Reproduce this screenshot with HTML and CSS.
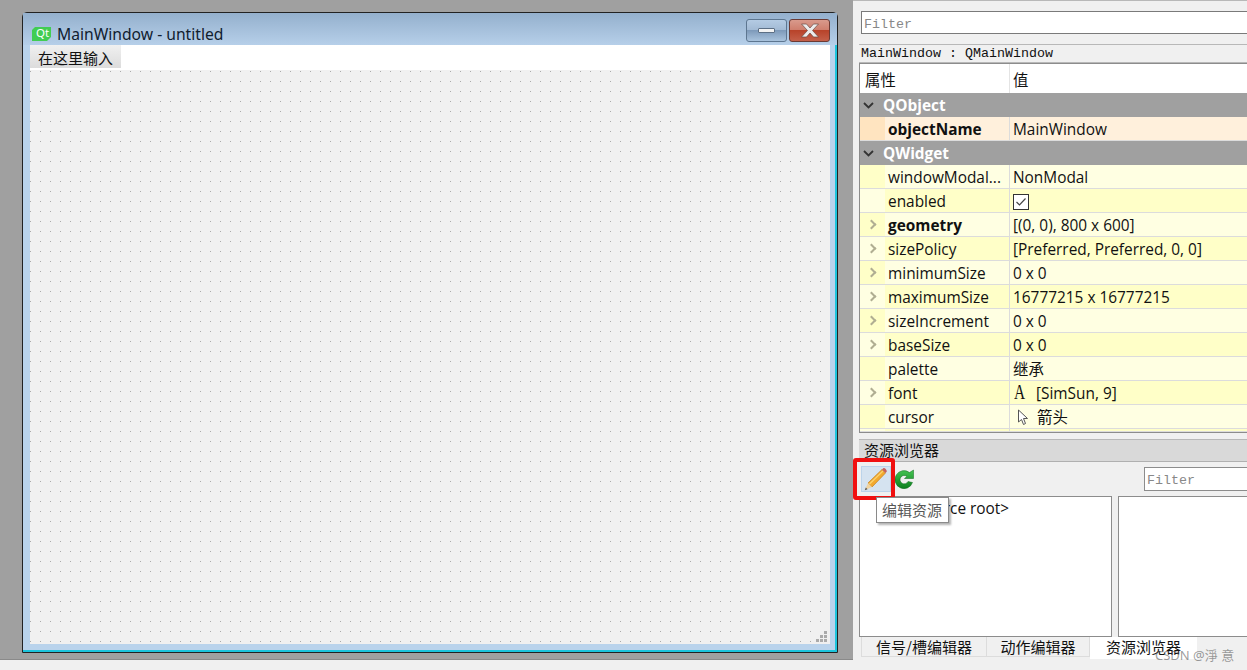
FILE: index.html
```html
<!DOCTYPE html>
<html lang="zh-CN">
<head>
    <meta charset="UTF-8">
    <title>Qt Designer - MainWindow</title>
    <link rel="stylesheet" href="styles.css">
</head>
<body>
    <div class="app">
        <!-- form editor -->
        <div class="canvas">
            <div class="form-window">
                <div class="title-bar">
                    <svg class="qt-logo" width="19" height="14" viewBox="0 0 19 14">
                        <path d="M3 0H19V10L15 14H0V3Z" fill="#41cd52"/>
                    </svg>
                    <span class="qt-text">Qt</span>
                    <span class="title-text">MainWindow - untitled</span>
                    <div class="win-btn min-btn"><span class="min-mark"></span></div>
                    <div class="win-btn close-btn">
                        <svg width="20" height="15" viewBox="0 0 20 15">
                            <path d="M1.500 1H6.500L10 5L13.500 1H18.500L12.500 7.500L18.500 14H13.500L10 10L6.500 14H1.500L7.500 7.500Z" fill="#ececec" stroke="#6b4a44" stroke-width="0.7"/>
                        </svg>
                    </div>
                </div>
                <div class="form-body">
                    <div class="menu-bar"><span class="menu-item">在这里输入</span></div>
                    <div class="dots">
                        <svg class="grip" width="11" height="11" viewBox="0 0 11 11" fill="#aaa">
                            <rect x="8" y="0" width="3" height="3"/>
                            <rect x="4" y="4" width="3" height="3"/><rect x="8" y="4" width="3" height="3"/>
                            <rect x="0" y="8" width="3" height="3"/><rect x="4" y="8" width="3" height="3"/><rect x="8" y="8" width="3" height="3"/>
                        </svg>
                    </div>
                </div>
            </div>
        </div>

        <!-- right side docks -->
        <div class="side">
            <div class="prop-filter"><div class="filter-input">Filter</div></div>
            <div class="object-label">MainWindow : QMainWindow</div>

            <div class="prop-table">
                <div class="row head"><div class="c1">属性</div><div class="c2">值</div></div>
                <div class="row group"><svg class="chev" width="11" height="7" viewBox="0 0 11 7"><path d="M1 1L5.500 5.500L10 1" fill="none" stroke="#333" stroke-width="1.8"/></svg>QObject</div>
                <div class="row orange"><div class="c1"><b>objectName</b></div><div class="c2">MainWindow</div></div>
                <div class="row group"><svg class="chev" width="11" height="7" viewBox="0 0 11 7"><path d="M1 1L5.500 5.500L10 1" fill="none" stroke="#333" stroke-width="1.8"/></svg>QWidget</div>
                <div class="row"><div class="c1">windowModal...</div><div class="c2">NonModal</div></div>
                <div class="row alt"><div class="c1">enabled</div><div class="c2">
                    <svg class="check" width="16" height="16" viewBox="0 0 16 16"><rect x="0.5" y="0.5" width="15" height="15" fill="#fff" stroke="#333"/><path d="M3.500 8L6.500 11L12.500 4.500" fill="none" stroke="#444" stroke-width="1.2"/></svg>
                </div></div>
                <div class="row"><div class="c1 more"><b>geometry</b></div><div class="c2">[(0, 0), 800 x 600]</div></div>
                <div class="row alt"><div class="c1 more">sizePolicy</div><div class="c2">[Preferred, Preferred, 0, 0]</div></div>
                <div class="row"><div class="c1 more">minimumSize</div><div class="c2">0 x 0</div></div>
                <div class="row alt"><div class="c1 more">maximumSize</div><div class="c2">16777215 x 16777215</div></div>
                <div class="row"><div class="c1 more">sizeIncrement</div><div class="c2">0 x 0</div></div>
                <div class="row alt"><div class="c1 more">baseSize</div><div class="c2">0 x 0</div></div>
                <div class="row"><div class="c1">palette</div><div class="c2">继承</div></div>
                <div class="row alt"><div class="c1 more">font</div><div class="c2"><span class="font-box"><span class="font-a">A</span></span>[SimSun, 9]</div></div>
                <div class="row"><div class="c1">cursor</div><div class="c2">
                    <svg class="arrow" width="12" height="17" viewBox="0 0 12 17"><path d="M1.500 1V13L4.500 10.500L6.500 15.500L8.500 14.500L6.500 9.500H10.500Z" fill="#fff" stroke="#555"/></svg>箭头
                </div></div>
                <div class="row alt stub"><div class="c1"></div><div class="c2"></div></div>
            </div>

            <div class="res-title">资源浏览器</div>
            <div class="res-tools">
                <div class="tool-btn">
                    <svg width="24" height="24" viewBox="0 0 24 24">
                        <path d="M4 16L18 2.500L21.500 6L8 20Z" fill="#f2a92e" stroke="#c47d18" stroke-width="0.7"/>
                        <path d="M5.500 17L19 4" stroke="#fbd36e" stroke-width="1.300"/>
                        <path d="M4 16L8 20L0.800 23.200Z" fill="#f0d3a0"/>
                        <path d="M0.800 23.200L1.800 20.500L3.500 22.200Z" fill="#555"/>
                        <path d="M18 2.500L19.500 1C20.800 0.500 23 3 22.800 4.500L21.500 6Z" fill="#c9605a"/>
                    </svg>
                </div>
                <svg class="refresh" width="20" height="20" viewBox="0 0 20 20">
                    <defs>
                        <linearGradient id="refresh-fill" x1="0" y1="0" x2="0" y2="1">
                            <stop offset="0" stop-color="#45c452"/>
                            <stop offset="1" stop-color="#0c7f1e"/>
                        </linearGradient>
                    </defs>
                    <path d="M17.500 13.500A9 9 0 1 1 14.500 3.500L18.500 1V9.500H9.500L12 7.500A4.200 4.200 0 1 0 13 12.500Z" fill="url(#refresh-fill)" stroke="#0d6b1a" stroke-width="0.5"/>
                </svg>
                <div class="res-filter">Filter</div>
            </div>
            <div class="res-panes">
                <div class="pane pane-left">&lt;resource root&gt;</div>
                <div class="pane pane-right"></div>
            </div>
            <div class="tabs">
                <div class="tab tab-a">信号/槽编辑器</div>
                <div class="tab tab-b">动作编辑器</div>
                <div class="tab tab-on">资源浏览器</div>
            </div>
        </div>
    </div>

    <!-- things lying over the docks -->
    <div class="red-box"></div>
    <div class="tooltip">编辑资源</div>
    <div class="watermark">CSDN @淨 意</div>
</body>
</html>
```

FILE: styles.css
```css
html, body {
    margin: 0;
    padding: 0;
    height: 670px;
    overflow: hidden;
}
body {
    position: relative;
    width: 1247px;
    background: #f0f0f0;
    font-family: "Open Sans", "Noto Sans CJK SC", sans-serif;
    font-size: 15.4px;
    color: #111;
}
.app {
    display: flex;
    height: 670px;
}

/* form editor */
.canvas {
    width: 853px;
    height: 660px;
    box-sizing: border-box;
    padding: 12px 0 0 22px;
    background: #a0a0a0;
    border-bottom: 1px solid #8a8a8a;
}
.form-window {
    width: 816px;
    height: 641px;
    box-sizing: border-box;
    display: flex;
    flex-direction: column;
    border: 1px solid #222;
    border-radius: 5px 5px 0 0;
    background: #b9d3ec;
    box-shadow: inset -2px -2px 0 #1cc4dc;
}
.title-bar {
    height: 32px;
    flex: none;
    display: flex;
    align-items: center;
    position: relative;
    padding: 9px 7px 0 9px;
    box-sizing: border-box;
    background: linear-gradient(#94b0cd, #b6cfe9);
}
.qt-logo {
    flex: none;
}
.qt-text {
    position: absolute;
    left: 13px;
    top: 13px;
    font-size: 11.5px;
    line-height: 14px;
    color: #fff;
    font-family: "Noto Sans", sans-serif;
}
.title-text {
    margin-left: 6px;
    flex: 1;
    font-size: 15.66px;
    color: #10202f;
    font-family: "Noto Sans", sans-serif;
}
.win-btn {
    height: 23px;
    box-sizing: border-box;
    display: flex;
    align-items: center;
    justify-content: center;
    border-radius: 3px;
    position: relative;
    top: -3px;
}
.min-btn {
    width: 41px;
    margin-right: 2px;
    border: 1px solid #5d7690;
    background: linear-gradient(#b4cbe3 0, #a2bad4 48%, #7e9aba 50%, #a9c3dd 100%);
}
.min-mark {
    width: 17px;
    height: 5px;
    box-sizing: border-box;
    background: #f3f3f3;
    border: 1px solid #5c6f85;
    border-radius: 1px;
}
.close-btn {
    width: 41px;
    border: 1px solid #6b3a34;
    background: linear-gradient(#d99a8c 0, #cf7f6e 46%, #b8432a 50%, #c4604a 100%);
}
.form-body {
    flex: 1;
    margin: 0 7px 8px 7px;
    display: flex;
    flex-direction: column;
    background: #f0f0f0;
}
.menu-bar {
    height: 25px;
    flex: none;
    background: #fff;
}
.menu-item {
    display: block;
    width: 91px;
    height: 23px;
    line-height: 25px;
    padding-left: 8px;
    box-sizing: border-box;
    font-family: "Noto Sans CJK SC", sans-serif;
    font-size: 15px;
    color: #111;
    background: linear-gradient(#f0f0f0, #dcdcdc);
}
.dots {
    flex: 1;
    position: relative;
    background-color: #aaa;
    background-image:
        linear-gradient(to right, transparent 1px, #f0f0f0 1px),
        linear-gradient(to bottom, transparent 1px, #f0f0f0 1px);
    background-size: 10px 10px;
    background-position: 0 1px;
}
.grip {
    position: absolute;
    right: 3px;
    bottom: 2px;
    background: #f0f0f0;
}

/* right side */
.side {
    width: 394px;
    flex: none;
    display: flex;
    flex-direction: column;
    box-sizing: border-box;
    padding-left: 6px;
    border-top: 1px solid #b8b8b8;
}
.prop-filter {
    height: 43px;
    flex: none;
    box-sizing: border-box;
    padding: 10px 0 0 2px;
}
.filter-input {
    height: 23px;
    box-sizing: border-box;
    overflow: hidden;
    border: 1px solid #7a7a7a;
    border-right: none;
    background: #fff;
    font-family: "Liberation Mono", monospace;
    font-size: 13.33px;
    line-height: 26px;
    padding-left: 2px;
    color: #888;
}
.object-label {
    height: 19px;
    flex: none;
    box-sizing: border-box;
    border-top: 1px solid #b8b8b8;
    border-bottom: 1px solid #b8b8b8;
    padding-left: 2px;
    font-family: "Liberation Mono", monospace;
    font-size: 13.33px;
    line-height: 18px;
    color: #111;
}
.prop-table {
    height: 370px;
    flex: none;
    box-sizing: border-box;
    overflow: hidden;
    border: 1px solid #8c8c8c;
    border-right: none;
    background: #fff;
}
.row {
    display: flex;
    height: 24px;
    box-sizing: border-box;
    line-height: 25px;
    background: #ffffe2 linear-gradient(#ffffc8, #ffffc8) no-repeat;
    background-size: 25px 100%;
    border-bottom: 1px solid #dcdcdc;
}
.row.alt {
    background: #ffffc8 linear-gradient(#ffffe2, #ffffe2) no-repeat;
    background-size: 25px 100%;
}
.row.orange {
    background: #fff0dc linear-gradient(#ffe4c0, #ffe4c0) no-repeat;
    background-size: 25px 100%;
}
.row.head {
    height: 29px;
    line-height: 33px;
    background: #fff;
    border-bottom: none;
}
.row.group {
    background: #a0a0a0;
    color: #fff;
    font-weight: bold;
    border-bottom: none;
    line-height: 25px;
}
.row.stub {
    height: 3px;
}
.chev {
    align-self: center;
    margin: 0 9px 0 3px;
}
.c1 {
    flex: none;
    width: 127px;
    margin-left: 23px;
    box-sizing: border-box;
    padding-left: 5px;
    border-right: 1px solid #dcdcdc;
    white-space: nowrap;
    overflow: hidden;
}
.row.head .c1 {
    width: 150px;
    margin-left: 0;
    border-right: 1px solid #e4e4e4;
}
.c1.more {
    position: relative;
    overflow: visible;
}
.c1.more::before {
    content: "";
    position: absolute;
    left: -15px;
    top: 8px;
    width: 5px;
    height: 5px;
    border-top: 2px solid #b0ae92;
    border-right: 2px solid #b0ae92;
    transform: rotate(45deg);
}
.c2 {
    flex: 1;
    box-sizing: border-box;
    padding: 2px 0 0 3px;
    display: flex;
    align-items: center;
    white-space: nowrap;
}
.row.head .c2 {
    padding-top: 0;
    align-items: flex-start;
}
.font-box {
    width: 23px;
    flex: none;
    padding-left: 1px;
    box-sizing: border-box;
}
.font-a {
    display: inline-block;
    font-family: "Liberation Serif", serif;
    font-size: 22px;
    line-height: 20px;
    transform: scaleX(0.7);
    transform-origin: left center;
}
.arrow {
    margin: 0 8px 0 4px;
}
.res-title {
    height: 23px;
    flex: none;
    margin-top: 6px;
    box-sizing: border-box;
    padding-left: 5px;
    background: #d9d9d9;
    border-top: 1px solid #b8b8b8;
    border-bottom: 1px solid #b0b0b0;
    font-family: "Noto Sans CJK SC", sans-serif;
    font-size: 15px;
    line-height: 20px;
}
.res-tools {
    height: 34px;
    flex: none;
    display: flex;
    align-items: center;
    padding-left: 2px;
}
.tool-btn {
    width: 30px;
    height: 26px;
    box-sizing: border-box;
    display: flex;
    align-items: center;
    justify-content: center;
    background: #d5e3f0;
    border: 1px solid #bcd4ea;
}
.refresh {
    margin-left: 4px;
}
.res-filter {
    margin-left: auto;
    width: 103px;
    height: 24px;
    box-sizing: border-box;
    overflow: hidden;
    border: 1px solid #8c8c8c;
    border-right: none;
    background: #fff;
    font-family: "Liberation Mono", monospace;
    font-size: 13.33px;
    line-height: 25px;
    padding-left: 2px;
    color: #888;
}
.res-panes {
    height: 141px;
    flex: none;
    display: flex;
    gap: 6px;
}
.pane {
    box-sizing: border-box;
    background: #fff;
    border: 1px solid #8c8c8c;
}
.pane-left {
    width: 253px;
    padding-left: 34px;
    line-height: 24px;
}
.pane-right {
    flex: 1;
    border-right: none;
}
.tabs {
    display: flex;
    padding-left: 2px;
    align-items: flex-start;
    font-family: "Noto Sans CJK SC", sans-serif;
    font-size: 15px;
}
.tab {
    height: 20px;
    line-height: 19px;
    box-sizing: border-box;
    text-align: center;
    border: 1px solid #dcdcdc;
    border-top: none;
    border-left: none;
}
.tab-a {
    width: 126px;
    border-left: 1px solid #dcdcdc;
}
.tab-b {
    width: 103px;
}
.tab-on {
    width: 107px;
    height: 22px;
    background: #fff;
    border: none;
}

/* overlays */
.red-box {
    position: absolute;
    left: 853px;
    top: 458px;
    width: 42px;
    height: 42px;
    box-sizing: border-box;
    border: 4px solid #f01010;
    border-radius: 3px;
}
.tooltip {
    position: absolute;
    left: 876px;
    top: 497px;
    width: 73px;
    height: 26px;
    box-sizing: border-box;
    background: #fff;
    border: 1px solid #8a8a8a;
    box-shadow: 2px 2px 2px rgba(0,0,0,0.3);
    font-family: "Noto Sans CJK SC", sans-serif;
    font-size: 15px;
    line-height: 24px;
    padding-left: 5px;
    color: #575757;
}
.watermark {
    position: absolute;
    left: 1155px;
    top: 646px;
    font-family: "Noto Sans", "Noto Sans CJK SC", sans-serif;
    font-size: 13px;
    line-height: 18px;
    color: rgba(90,90,90,0.6);
}
```
